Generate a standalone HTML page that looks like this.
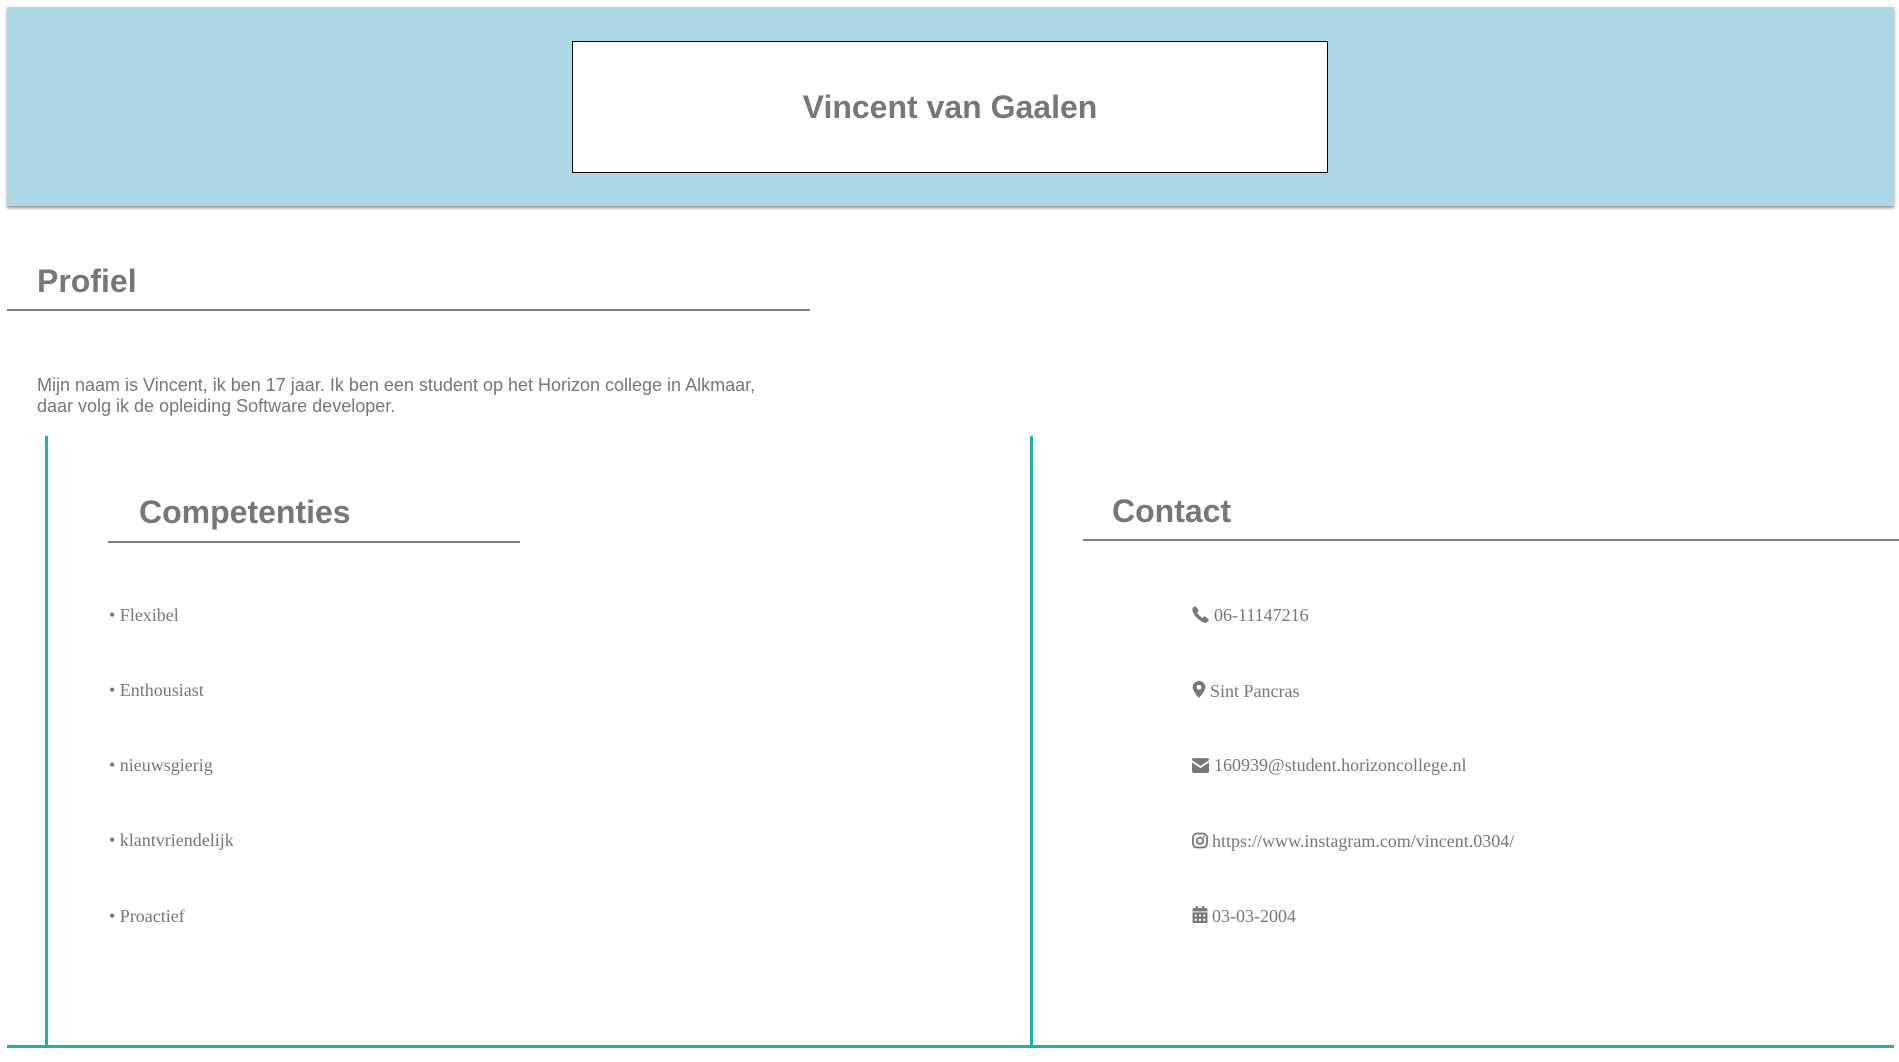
<!DOCTYPE html>
<html><head><meta charset="utf-8"><style>
*{margin:0;padding:0;box-sizing:border-box}
body{width:1899px;height:1062px;background:#fff;position:relative;overflow:hidden;font-family:"Liberation Sans",Arial,sans-serif;color:#777}
.abs{position:absolute}
.header{left:7px;top:7px;width:1887px;height:199px;background:#add8e6;box-shadow:0 2px 3px rgba(0,0,0,.45)}
.name{left:572px;top:41px;width:756px;height:132px;background:#fff;border:1px solid #000;display:flex;align-items:center;justify-content:center;font-weight:bold;font-size:32px;color:#777}
h2{position:absolute;font-weight:bold;color:#777;line-height:1}
.rule{position:absolute;height:2px;background:#808080}
.teal{position:absolute;background:#20b2aa}
.p{left:37px;top:375px;font-size:18px;line-height:21px;width:800px}
.li{position:absolute;font-family:"Liberation Serif","Times New Roman",serif;font-size:18px;color:#777;line-height:20px;white-space:nowrap}
.ic{position:absolute;left:1192px;width:17px;height:17px}
</style></head><body>
<div class="abs header"></div>
<div class="abs name">Vincent van Gaalen</div>

<h2 style="left:37px;top:265px;font-size:32px">Profiel</h2>
<div class="rule" style="left:7px;top:309px;width:803px"></div>
<div class="abs p">Mijn naam is Vincent, ik ben 17 jaar. Ik ben een student op het Horizon college in Alkmaar,<br>daar volg ik de opleiding Software developer.</div>

<div class="teal" style="left:45px;top:436px;width:3px;height:611px"></div>
<div class="teal" style="left:1030px;top:436px;width:3px;height:611px"></div>
<div class="teal" style="left:7px;top:1045px;width:1887px;height:3px"></div>

<h2 style="left:139px;top:496px;font-size:32px">Competenties</h2>
<div class="rule" style="left:108px;top:541px;width:412px"></div>

<h2 style="left:1112px;top:495px;font-size:32px">Contact</h2>
<div class="rule" style="left:1083px;top:539px;width:816px"></div>

<div class="li" style="left:109px;top:605px">• Flexibel</div>
<div class="li" style="left:109px;top:680px">• Enthousiast</div>
<div class="li" style="left:109px;top:755px">• nieuwsgierig</div>
<div class="li" style="left:109px;top:830px">• klantvriendelijk</div>
<div class="li" style="left:109px;top:906px">• Proactief</div>

<svg class="ic" style="top:606px" viewBox="0 0 16 16"><path fill="#777" d="M3.5 0.5 L6 3.5 C6.5 4.2 6.3 4.8 5.7 5.3 L4.8 6 C5.7 8 7.8 10.2 10 11.2 L10.8 10.3 C11.3 9.7 11.9 9.6 12.5 10 L15.5 12.5 C16 13 15.8 13.7 15.3 14.2 L14 15.4 C13 16.2 11 15.8 8.5 14.2 C5 12 2 8.6 0.8 5.5 C0.1 3.6 0.2 2.4 1 1.6 L2.2 0.5 C2.6 0.1 3.1 0.1 3.5 0.5Z"/></svg>
<div class="li" style="left:1214px;top:605px">06-11147216</div>

<svg class="ic" style="top:681px;width:14px" viewBox="0 0 12 16"><path fill="#777" d="M6 0C2.7 0 0 2.6 0 5.9 0 9.5 6 16 6 16s6-6.5 6-10.1C12 2.6 9.3 0 6 0zm0 8.2A2.3 2.3 0 1 1 6 3.6a2.3 2.3 0 0 1 0 4.6z"/></svg>
<div class="li" style="left:1210px;top:681px">Sint Pancras</div>

<svg class="ic" style="top:757px" viewBox="0 0 16 14"><path fill="#777" d="M0 1.5C0 .7.7 0 1.5 0h13c.8 0 1.5.7 1.5 1.5v.5L8 7.5 0 2zM0 4l8 5.5L16 4v8.5c0 .8-.7 1.5-1.5 1.5h-13C.7 14 0 13.3 0 12.5z"/></svg>
<div class="li" style="left:1214px;top:755px">160939@student.horizoncollege.nl</div>

<svg class="ic" style="top:832px;width:16px" viewBox="0 0 16 16"><rect x="1" y="1" width="14" height="14" rx="4" fill="none" stroke="#777" stroke-width="1.8"/><circle cx="8" cy="8.3" r="3.2" fill="none" stroke="#777" stroke-width="1.8"/><circle cx="12" cy="4" r="1" fill="#777"/></svg>
<div class="li" style="left:1212px;top:831px">https://www.instagram.com/vincent.0304/</div>

<svg class="ic" style="top:906px;width:16px" viewBox="0 0 14 16"><path fill="#777" d="M3 0h2v2h4V0h2v2h2c.6 0 1 .4 1 1v2H0V3c0-.6.4-1 1-1h2zM0 6h14v9c0 .6-.4 1-1 1H1c-.6 0-1-.4-1-1z"/><g fill="#fff"><rect x="2" y="8" width="2" height="2"/><rect x="6" y="8" width="2" height="2"/><rect x="10" y="8" width="2" height="2"/><rect x="2" y="12" width="2" height="2"/><rect x="6" y="12" width="2" height="2"/><rect x="10" y="12" width="2" height="2"/></g></svg>
<div class="li" style="left:1212px;top:906px">03-03-2004</div>
</body></html>
